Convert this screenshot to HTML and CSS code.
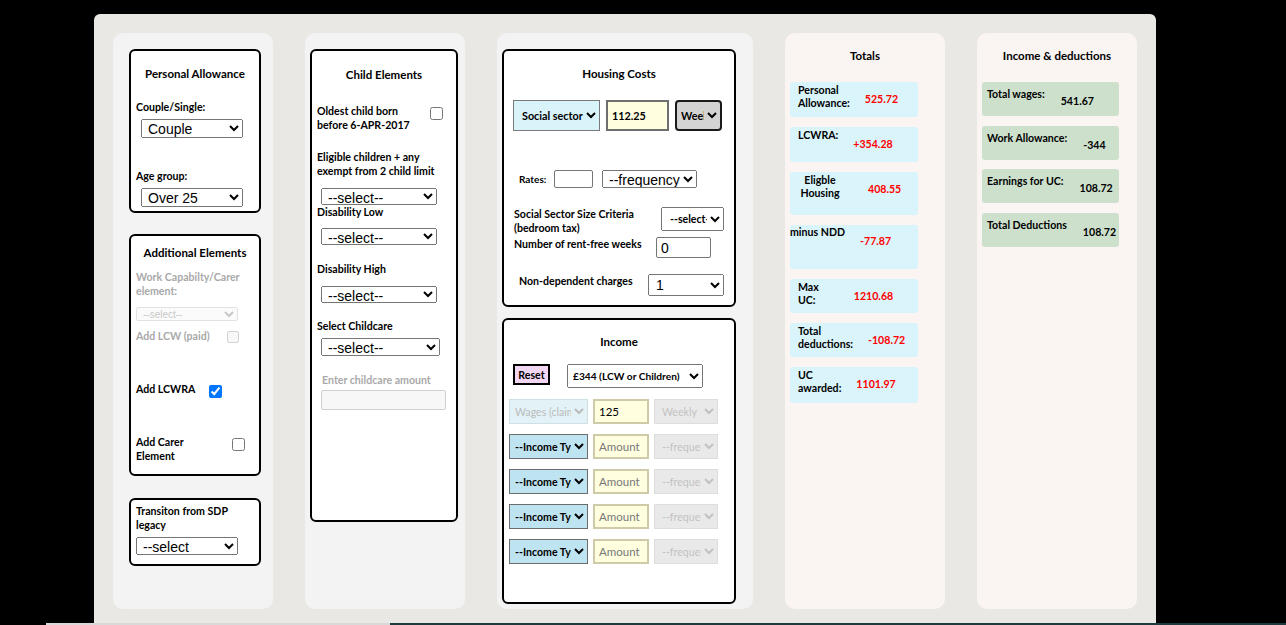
FILE: index.html
```html
<!DOCTYPE html>
<html lang="en">
<head>
<meta charset="utf-8">
<title>UC Calculator</title>
<link rel="stylesheet" href="styles.css">
</head>
<body>
<div class="app">
  <div class="col col-plain col-1">
    <section class="card card-pa">
      <h3 class="card-title t-pa">Personal Allowance</h3>
      <label class="lbl lbl-couple">Couple/Single:</label>
      <select class="sel sel-pa"><option>Couple</option></select>
      <label class="lbl lbl-age">Age group:</label>
      <select class="sel sel-pa"><option>Over 25</option></select>
    </section>

    <section class="card card-add">
      <h3 class="card-title t-add">Additional Elements</h3>
      <label class="lbl lbl-muted lbl-wca">Work Capabilty/Carer element:</label>
      <select class="sel sel-mini" disabled><option>--select--</option></select>
      <div class="chk-row row-lcw">
        <span class="lbl lbl-muted w-lcw">Add LCW (paid)</span>
        <input type="checkbox" class="chk" disabled>
      </div>
      <div class="chk-row row-lcwra">
        <span class="lbl w-lcwra">Add LCWRA</span>
        <input type="checkbox" class="chk" checked>
      </div>
      <div class="chk-row row-carer">
        <span class="lbl w-carer">Add Carer Element</span>
        <input type="checkbox" class="chk chk-carer">
      </div>
    </section>

    <section class="card card-sdp">
      <label class="lbl lbl-sdp">Transiton from SDP legacy</label>
      <select class="sel sel-sdp"><option>--select</option></select>
    </section>
  </div>

  <div class="col col-plain col-2">
    <section class="card card-child">
      <h3 class="card-title t-child">Child Elements</h3>
      <div class="chk-row row-oldest">
        <span class="lbl w-oldest">Oldest child born before 6-APR-2017</span>
        <input type="checkbox" class="chk chk-oldest">
      </div>
      <label class="lbl lbl-elig">Eligible children + any exempt from 2 child limit</label>
      <select class="sel sel-child s-elig"><option>--select--</option></select>
      <label class="lbl lbl-dlow">Disability Low</label>
      <select class="sel sel-child s-dlow"><option>--select--</option></select>
      <label class="lbl lbl-dhigh">Disability High</label>
      <select class="sel sel-child s-dhigh"><option>--select--</option></select>
      <label class="lbl lbl-cc">Select Childcare</label>
      <select class="sel sel-child s-cc"><option>--select--</option></select>
      <label class="lbl lbl-muted lbl-ccamt">Enter childcare amount</label>
      <input type="text" class="inp inp-cc" disabled>
    </section>
  </div>

  <div class="col col-plain col-3">
    <section class="card card-housing">
      <h3 class="card-title t-housing">Housing Costs</h3>
      <div class="h-row">
        <select class="sel sel-sector"><option>Social sector</option></select>
        <input type="text" class="inp inp-rent" value="112.25">
        <select class="sel sel-week"><option>Weekly</option></select>
      </div>
      <div class="rates-row">
        <span class="lbl lbl-rates">Rates:</span>
        <input type="text" class="inp inp-rates">
        <select class="sel sel-freq"><option>--frequency--</option></select>
      </div>
      <div class="bed-row">
        <span class="lbl lbl-bed">Social Sector Size Criteria (bedroom tax)</span>
        <select class="sel sel-bed"><option>--select--</option></select>
      </div>
      <div class="free-row">
        <span class="lbl lbl-free">Number of rent-free weeks</span>
        <input type="text" class="inp inp-free" value="0">
      </div>
      <div class="ndd-row">
        <span class="lbl lbl-ndd">Non-dependent charges</span>
        <select class="sel sel-ndd"><option>1</option></select>
      </div>
    </section>

    <section class="card card-income">
      <h3 class="card-title t-income">Income</h3>
      <div class="reset-row">
        <button class="btn-reset">Reset</button>
        <select class="sel sel-wa"><option>£344 (LCW or Children)</option></select>
      </div>
      <div class="inc-rows">
        <div class="inc-row">
          <select class="sel sel-type sel-type-off" disabled><option>Wages (claimant)</option></select>
          <input type="text" class="inp inp-amt" value="125">
          <select class="sel sel-ifreq" disabled><option>Weekly</option></select>
        </div>
        <div class="inc-row">
          <select class="sel sel-type"><option>--Income Type--</option></select>
          <input type="text" class="inp inp-amt" placeholder="Amount">
          <select class="sel sel-ifreq" disabled><option>--frequency--</option></select>
        </div>
        <div class="inc-row">
          <select class="sel sel-type"><option>--Income Type--</option></select>
          <input type="text" class="inp inp-amt" placeholder="Amount">
          <select class="sel sel-ifreq" disabled><option>--frequency--</option></select>
        </div>
        <div class="inc-row">
          <select class="sel sel-type"><option>--Income Type--</option></select>
          <input type="text" class="inp inp-amt" placeholder="Amount">
          <select class="sel sel-ifreq" disabled><option>--frequency--</option></select>
        </div>
        <div class="inc-row">
          <select class="sel sel-type"><option>--Income Type--</option></select>
          <input type="text" class="inp inp-amt" placeholder="Amount">
          <select class="sel sel-ifreq" disabled><option>--frequency--</option></select>
        </div>
      </div>
    </section>
  </div>

  <div class="col col-sum col-4">
    <h3 class="sum-title">Totals</h3>
    <div class="tot-list">
      <div class="tot b1"><span class="tot-lbl">Personal Allowance:</span><span class="tot-val">525.72</span></div>
      <div class="tot b2"><span class="tot-lbl">LCWRA:</span><span class="tot-val">+354.28</span></div>
      <div class="tot b3"><span class="tot-lbl tl-center">Eligble Housing</span><span class="tot-val tv-wide">408.55</span></div>
      <div class="tot b4"><span class="tot-lbl tl-flush">minus NDD</span><span class="tot-val">-77.87</span></div>
      <div class="tot b5"><span class="tot-lbl">Max UC:</span><span class="tot-val tv-max">1210.68</span></div>
      <div class="tot b6"><span class="tot-lbl">Total deductions:</span><span class="tot-val">-108.72</span></div>
      <div class="tot b7"><span class="tot-lbl">UC awarded:</span><span class="tot-val">1101.97</span></div>
    </div>
  </div>

  <div class="col col-sum col-5">
    <h3 class="sum-title">Income &amp; deductions</h3>
    <div class="ded-list">
      <div class="ded"><span class="ded-lbl">Total wages:</span><span class="ded-val">541.67</span></div>
      <div class="ded"><span class="ded-lbl">Work Allowance:</span><span class="ded-val">-344</span></div>
      <div class="ded"><span class="ded-lbl">Earnings for UC:</span><span class="ded-val">108.72</span></div>
      <div class="ded"><span class="ded-lbl">Total Deductions</span><span class="ded-val">108.72</span></div>
    </div>
  </div>
</div>
<div class="footer-strip"><span class="fs-a"></span><span class="fs-b"></span></div>
</body>
</html>
```

FILE: styles.css
```css
* { box-sizing: border-box; }

body {
  margin: 0;
  background: #000;
  font-family: Lato, "Open Sans", sans-serif;
  font-size: 10.6px;
  font-weight: 700;
  color: #000;
  overflow: hidden;
}

.app {
  margin: 14px 0 0 94px;
  width: 1062px;
  background: #e9e8e4;
  border-radius: 6px 6px 0 0;
  padding: 19px 19px 14px;
  display: flex;
  gap: 32px;
}

.col { height: 576px; border-radius: 10px; flex: none; }
.col-plain { background: #f3f3f3; }
.col-sum { background: #faf4f3; }
.col-1 { width: 160px; padding: 16px 12px 0 16px; }
.col-2 { width: 160px; padding: 16px 7px 0 5px; }
.col-3 { width: 256px; padding: 16px 17px 0 5px; }
.col-4 { width: 160px; padding: 16px 5px 0 5px; }
.col-5 { width: 160px; padding: 16px 5px 0 5px; }

.card {
  background: #fff;
  border: 2px solid #000;
  border-radius: 6px;
}

.card-title {
  margin: 0;
  font-size: 11.5px;
  line-height: 14px;
  font-weight: 700;
  text-align: center;
}

.lbl { display: block; line-height: 14px; }
.lbl-muted { color: #a9a9a9; }

.sel {
  display: block;
  font-family: "Liberation Sans", Arial, sans-serif;
  font-size: 14px;
  font-weight: 400;
  color: #000;
  padding: 0 0 0 2px;
  margin: 0;
}

.inp {
  display: block;
  margin: 0;
  font-family: "Liberation Sans", Arial, sans-serif;
  font-size: 14px;
  padding: 0 4px;
  border: 1px solid #767676;
  border-radius: 2px;
}

.chk { margin: 0; width: 13px; height: 13px; flex: none; }

/* ---------- column 1 ---------- */
.card-pa { height: 164px; }
.t-pa { margin-top: 16px; }
.lbl-couple { padding-left: 5px; margin-top: 19px; }
.lbl-age { padding-left: 5px; margin-top: 31px; }
.sel-pa { margin: 5px 0 0 10px; width: 102px; height: 19px; }

.card-add { height: 242px; margin-top: 21px; }
.t-add { margin-top: 10px; }
.lbl-wca { padding-left: 5px; margin-top: 10px; width: 115px; }
.sel-mini {
  margin: 9px 0 0 5px;
  width: 102px;
  height: 14px;
  font-size: 10px;
  color: #b0b0b0;
  background: #fafafa;
  border: 1px solid #d6d6d6;
  border-radius: 2px;
}
.chk-row { display: flex; align-items: flex-start; }
.chk-row .chk { margin-top: 3px; }
.row-lcw { margin-top: 8px; }
.row-lcw .chk { margin-top: 2px; width: 12px; height: 12px; }
.row-lcwra { margin-top: 39px; }
.row-carer { margin-top: 37px; }
.w-lcw { padding-left: 5px; width: 96px; }
.w-lcwra { padding-left: 5px; width: 78px; }
.w-carer { padding-left: 5px; width: 70px; }
.chk-carer { margin-left: 31px; }

.card-sdp { height: 68px; margin-top: 22px; }
.lbl-sdp { padding-left: 5px; margin-top: 4px; width: 112px; }
.sel-sdp { margin: 5px 0 0 5px; width: 102px; height: 18px; }

/* ---------- column 2 ---------- */
.card-child { height: 473px; }
.t-child { margin-top: 17px; }
.row-oldest { margin-top: 22px; }
.w-oldest { padding-left: 5px; width: 110px; }
.chk-oldest { margin-left: 8px; }
.lbl-elig { padding-left: 5px; margin-top: 18px; width: 140px; }
.sel-child { margin-left: 9px; width: 116px; height: 17px; }
.s-elig { margin-top: 10px; }
.lbl-dlow { padding-left: 5px; margin-top: 0; }
.s-dlow { margin-top: 9px; }
.lbl-dhigh { padding-left: 5px; margin-top: 17px; }
.s-dhigh { margin-top: 10px; }
.lbl-cc { padding-left: 5px; margin-top: 16px; }
.s-cc { margin-top: 5px; width: 119px; height: 18px; }
.lbl-ccamt { padding-left: 10px; margin-top: 17px; }
.inp-cc {
  margin: 3px 0 0 9px;
  width: 125px;
  height: 20px;
  background: #f7f7f7;
  border: 1px solid #d0d0d0;
}

/* ---------- column 3 ---------- */
.card-housing { height: 258px; }
.t-housing { margin-top: 16px; }
.h-row { display: flex; gap: 6px; margin-top: 19px; padding-left: 9px; }
.sel-sector {
  width: 87px;
  height: 31px;
  background: #d9f3fa;
  border: 1px solid #7a7a7a;
  border-radius: 0;
  font-family: Lato, sans-serif;
  font-size: 10.8px;
  font-weight: 700;
  padding-left: 4px;
}
.inp-rent {
  width: 63px;
  height: 31px;
  background: #ffffe0;
  border: 2px solid #6f6f6f;
  border-radius: 0;
  font-family: Lato, sans-serif;
  font-size: 10.8px;
  font-weight: 700;
  padding-left: 4px;
}
.sel-week {
  width: 47px;
  height: 31px;
  background: #d3d3d3;
  border: 2px solid #1a1a1a;
  border-radius: 4px;
  font-family: Lato, sans-serif;
  font-size: 10.8px;
  font-weight: 700;
  padding-left: 0;
}
.rates-row { display: flex; align-items: center; margin-top: 39px; padding-left: 15px; }
.lbl-rates { width: 35px; font-size: 10px; }
.inp-rates { width: 39px; height: 18px; }
.sel-freq { margin-left: 9px; width: 95px; height: 18px; }
.bed-row { display: flex; align-items: flex-start; justify-content: space-between; margin-top: 19px; padding: 0 10px 0 10px; }
.lbl-bed { width: 136px; }
.sel-bed {
  width: 63px;
  height: 24px;
  font-family: Lato, sans-serif;
  font-size: 10.6px;
  font-weight: 700;
  padding-left: 4px;
}
.free-row { display: flex; align-items: flex-start; margin-top: 2px; padding-left: 10px; }
.lbl-free { width: 142px; }
.inp-free { width: 55px; height: 21px; padding-left: 4px; }
.ndd-row { display: flex; align-items: flex-start; margin-top: 16px; padding-left: 15px; }
.lbl-ndd { width: 129px; }
.sel-ndd { width: 76px; height: 22px; padding-left: 3px; }

.card-income { height: 286px; margin-top: 11px; }
.t-income { margin-top: 15px; }
.reset-row { display: flex; align-items: flex-start; gap: 17px; margin-top: 15px; padding-left: 9px; }
.btn-reset {
  width: 37px;
  height: 21px;
  padding: 0;
  background: #f3d6f3;
  border: 2px solid #000;
  border-radius: 0;
  font-family: Lato, sans-serif;
  font-size: 10.6px;
  font-weight: 700;
  color: #000;
}
.sel-wa {
  width: 136px;
  height: 24px;
  font-family: Lato, sans-serif;
  font-size: 10.2px;
  font-weight: 700;
  padding-left: 1px;
}
.inc-rows { display: flex; flex-direction: column; gap: 10px; margin-top: 11px; padding-left: 5px; }
.inc-row { display: flex; gap: 5px; }
.sel-type {
  width: 79px;
  height: 25px;
  background: #bfe4f1;
  border: 1px solid #6c6c6c;
  border-radius: 0;
  font-family: Lato, sans-serif;
  font-size: 10.6px;
  font-weight: 700;
  padding-left: 1px;
}
.sel-type-off {
  background: #d6edf5;
  border-color: #b9d3dc;
  color: #a0a0a0;
  font-weight: 400;
}
.inp-amt {
  width: 56px;
  height: 25px;
  background: #ffffe0;
  border: 2px solid #cfcba8;
  border-radius: 0;
  font-family: Lato, sans-serif;
  font-size: 11.5px;
  font-weight: 400;
  padding-left: 4px;
}
.inp-amt::placeholder { color: #777; }
.sel-ifreq {
  width: 64px;
  height: 25px;
  background: #e1e1e1;
  border: 1px solid #d0d0d0;
  border-radius: 0;
  color: #a8a8a8;
  font-family: Lato, sans-serif;
  font-size: 10.6px;
  font-weight: 400;
  padding-left: 3px;
}

/* ---------- totals ---------- */
.sum-title {
  margin: 0;
  font-size: 11.5px;
  line-height: 14px;
  font-weight: 700;
  text-align: center;
}
.tot-list { display: flex; flex-direction: column; gap: 10px; margin-top: 19px; width: 128px; }
.tot {
  display: flex;
  align-items: flex-start;
  background: #d9f4fa;
  border-radius: 3px;
  padding: 2px 0 0 8px;
  line-height: 13px;
}
.tot-lbl { width: min-content; flex: none; }
.tot-val { color: #f00; margin: 9px 0 0 15px; white-space: nowrap; }
.b1 { height: 35px; }
.b2 { height: 35px; }
.b3 { height: 43px; }
.b4 { height: 44px; padding-left: 0; padding-top: 1px; }
.b5 { height: 34px; }
.b6 { height: 34px; }
.b7 { height: 36px; }
.tl-center { text-align: center; width: 44px; }
.tv-wide { margin-left: 26px; }
.tl-flush { width: auto; white-space: nowrap; }
.tv-max { margin-left: 35px; }

.ded-list { display: flex; flex-direction: column; gap: 9.5px; margin-top: 19px; width: 137px; }
.ded {
  display: flex;
  align-items: flex-start;
  height: 34px;
  background: #cde0cc;
  border-radius: 3px;
  padding: 6px 0 0 5px;
  line-height: 13px;
}
.ded-lbl { white-space: nowrap; }
.ded-val { margin: 7px 0 0 16px; white-space: nowrap; }

.footer-strip { display: flex; height: 2px; margin-left: 46px; }
.fs-a { width: 344px; background: #d9d9d9; }
.fs-b { flex: 1; background: #1e3a3d; }
```
